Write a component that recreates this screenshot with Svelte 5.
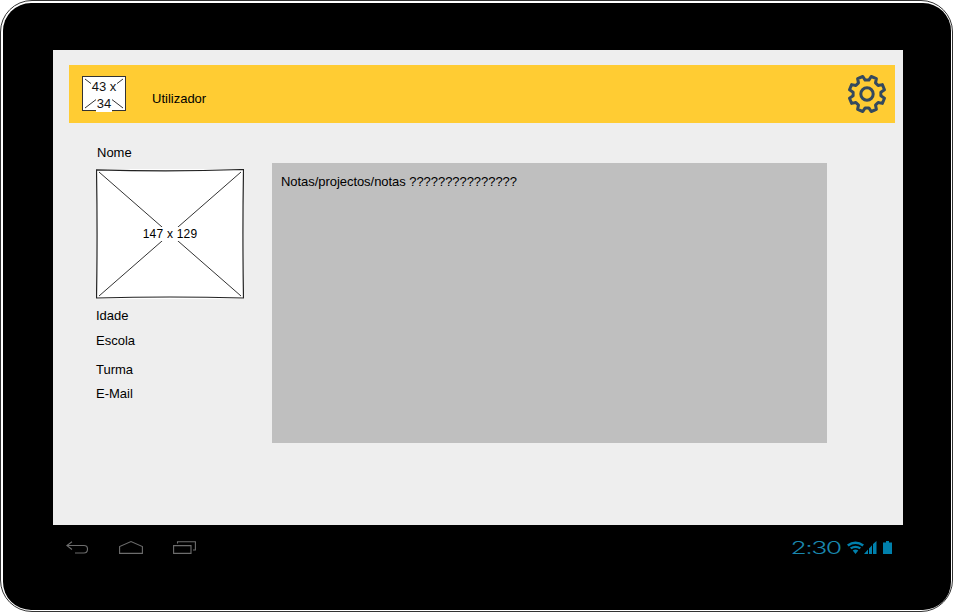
<script>
  const fields = [
    { label: 'Idade', cls: 'idade' },
    { label: 'Escola', cls: 'escola' },
    { label: 'Turma', cls: 'turma' },
    { label: 'E-Mail', cls: 'email' }
  ];

  const polar = (r, deg) => {
    const a = (deg * Math.PI) / 180;
    return `${(20 + r * Math.sin(a)).toFixed(2)} ${(20 - r * Math.cos(a)).toFixed(2)}`;
  };

  const gearPath = Array.from({ length: 8 }, (_, i) => {
    const a = 22.5 + 45 * i;
    return [polar(14, a - 15), polar(18, a - 9), polar(18, a + 9), polar(14, a + 15)]
      .map((p, j) => (i === 0 && j === 0 ? 'M' : 'L') + p)
      .join(' ');
  }).join(' ') + ' Z';
</script>

<div class="device">
  <div class="bezel">
    <div class="screen">
      <header class="topbar">
        <div class="avatar">
          <svg class="cross" viewBox="0 0 42 33" preserveAspectRatio="none" aria-hidden="true">
            <path d="M2 2 L40 31 M40 2 L2 31" />
          </svg>
          <div class="avatar-label"><span>43 x</span><span>34</span></div>
        </div>
        <span class="user">Utilizador</span>
        <svg class="gear" viewBox="0 0 40 40" aria-hidden="true">
          <path d={gearPath} />
          <circle cx="20" cy="20" r="6.2" />
        </svg>
      </header>

      <main class="content">
        <section class="profile">
          <div class="name">Nome</div>
          <div class="photo">
            <svg class="cross" viewBox="0 0 148 130" preserveAspectRatio="none" aria-hidden="true">
              <path d="M3 3 L145 127 M145 3 L3 127" />
            </svg>
            <svg class="sketch" viewBox="0 0 148 130" preserveAspectRatio="none" aria-hidden="true">
              <path d="M0.5 0.8 Q74 3 147.5 0.5 Q146.4 65 147.5 129 Q74 127 0.5 129 Q1.6 65 0.5 0.8 Z" />
            </svg>
            <span class="photo-label">147 x 129</span>
          </div>
          <ul class="fields">
            {#each fields as f}
              <li class={f.cls}>{f.label}</li>
            {/each}
          </ul>
        </section>
        <section class="notes">Notas/projectos/notas ???????????????</section>
      </main>
    </div>

    <footer class="navbar">
      <div class="nav-icons">
        <svg class="nav-back" viewBox="0 0 22 13" aria-hidden="true">
          <path d="M6 0.7 L0.8 4.5 L6 8.5 M0.8 4.5 H18 Q21.5 4.5 21.5 8 Q21.5 12 18 12 H9" />
        </svg>
        <svg class="nav-home" viewBox="0 0 24 13" aria-hidden="true">
          <path d="M0.6 12.4 V5.5 L12 0.6 L23.4 5.5 V12.4 Z" />
        </svg>
        <svg class="nav-recent" viewBox="0 0 23 13" aria-hidden="true">
          <path d="M0.6 4.6 H18 V12.4 H0.6 Z M4.5 2.6 V0.8 H22.4 V9 H20" />
        </svg>
      </div>
      <div class="status">
        <svg class="clock" viewBox="0 0 50 13" aria-hidden="true">
          <text x="-1.5" y="12.6" textLength="50" lengthAdjust="spacingAndGlyphs">2:30</text>
        </svg>
        <svg class="wifi" viewBox="0 0 17 13" aria-hidden="true">
          <path d="M0 3.6 Q8.5 -2.4 17 3.6 L15.4 5.4 Q8.5 0.7 1.6 5.4 Z M2.9 6.6 Q8.5 2.7 14.1 6.6 L12.5 8.3 Q8.5 5.7 4.5 8.3 Z M5.7 9.4 Q8.5 7.7 11.3 9.4 L8.5 13 Z" />
        </svg>
        <svg class="signal" viewBox="0 0 13 13" aria-hidden="true">
          <path d="M0 13 L4 8.6 V13 Z M5 13 V7.5 L8 4.2 V13 Z M9 13 V3.1 L12.5 0 V13 Z" />
        </svg>
        <svg class="battery" viewBox="0 0 9 13" aria-hidden="true">
          <path d="M3 0 H6 V1.5 H9 V13 H0 V1.5 H3 Z" />
        </svg>
      </div>
    </footer>
  </div>
</div>

<style>
  :global(body) {
    margin: 0;
    background: #fff;
  }

  .device {
    box-sizing: border-box;
    width: 953px;
    height: 612px;
    padding: 2px 1px 1px 2px;
    border: 1px solid #333;
    border-radius: 32px;
    background: #fff;
    font-family: 'Liberation Sans', Arial, sans-serif;
    font-size: 13px;
    color: #000;
  }

  .bezel {
    box-sizing: border-box;
    height: 100%;
    padding: 47px 48px 0 50px;
    background: #000;
    border-radius: 28px;
    display: flex;
    flex-direction: column;
  }

  .screen {
    box-sizing: border-box;
    height: 475px;
    flex: none;
    background: #eee;
    padding: 15px 8px 0 16px;
  }

  .topbar {
    box-sizing: border-box;
    height: 58px;
    background: #fc3;
    display: flex;
    align-items: center;
    padding: 0 8px 0 13px;
  }

  .avatar {
    position: relative;
    box-sizing: border-box;
    width: 44px;
    height: 35px;
    margin-top: -1px;
    background: #fff;
    border: 1px solid #333;
    flex: none;
  }

  .avatar-label {
    position: absolute;
    inset: 1px 0 0;
    display: flex;
    flex-direction: column;
    align-items: center;
    line-height: 17px;
    color: #111;
  }

  .avatar-label span {
    background: #fff;
    padding: 0 1px;
  }

  .cross {
    position: absolute;
    inset: 0;
    width: 100%;
    height: 100%;
  }

  .cross path {
    fill: none;
    stroke: #333;
    stroke-width: 1;
  }

  .user {
    margin: 9px 0 0 26px;
  }

  .gear {
    width: 40px;
    height: 40px;
    margin-left: auto;
    flex: none;
  }

  .gear path,
  .gear circle {
    fill: none;
    stroke: #34495e;
    stroke-width: 3;
    stroke-linejoin: round;
  }

  .content {
    display: flex;
    align-items: flex-start;
  }

  .profile {
    width: 148px;
    margin: 22px 0 0 27px;
  }

  .name {
    height: 15px;
    line-height: 15px;
    padding-left: 1px;
    margin-bottom: 9px;
  }

  .photo {
    position: relative;
    width: 148px;
    height: 130px;
    background: #fff;
  }

  .sketch {
    position: absolute;
    inset: 0;
    width: 100%;
    height: 100%;
  }

  .sketch path {
    fill: none;
    stroke: #222;
    stroke-width: 1.2;
  }

  .photo-label {
    position: absolute;
    left: 50%;
    top: 50%;
    transform: translate(-50%, -50%);
    padding: 0 2px;
    background: #fff;
    font-size: 12px;
    line-height: 14px;
    letter-spacing: 0.2px;
    white-space: nowrap;
  }

  .fields {
    list-style: none;
    margin: 0;
    padding: 0;
  }

  .fields li {
    line-height: 15px;
  }

  .idade { margin-top: 9px; }
  .escola { margin-top: 10px; }
  .turma { margin-top: 14px; }
  .email { margin-top: 9px; }

  .notes {
    box-sizing: border-box;
    width: 555px;
    height: 280px;
    margin: 40px 0 0 28px;
    padding: 11px 9px;
    background: #bfbfbf;
    line-height: 15px;
    letter-spacing: -0.05px;
  }

  .navbar {
    display: flex;
    justify-content: space-between;
    padding: 16px 11px 0 13px;
  }

  .nav-icons {
    display: flex;
    align-items: flex-end;
    height: 13px;
  }

  .nav-icons svg path {
    fill: none;
    stroke: #6d6d6d;
    stroke-width: 1.1;
  }

  .nav-back { width: 22px; height: 13px; }
  .nav-home { width: 24px; height: 13px; margin-left: 31px; }
  .nav-recent { width: 23px; height: 13px; margin-left: 30px; }

  .status {
    display: flex;
    align-items: flex-end;
    height: 13px;
  }

  .clock {
    width: 50px;
    height: 13px;
    overflow: visible;
  }

  .clock text {
    font-family: Inter, 'Liberation Sans', sans-serif;
    font-weight: 300;
    font-size: 17px;
    letter-spacing: -1px;
    fill: #1a87ad;
  }

  .wifi { width: 17px; height: 13px; margin-left: 5px; }
  .signal { width: 13px; height: 13px; }
  .battery { width: 9px; height: 13px; margin-left: 6px; }

  .wifi path, .battery path, .signal path { fill: #0080ac; }
</style>
